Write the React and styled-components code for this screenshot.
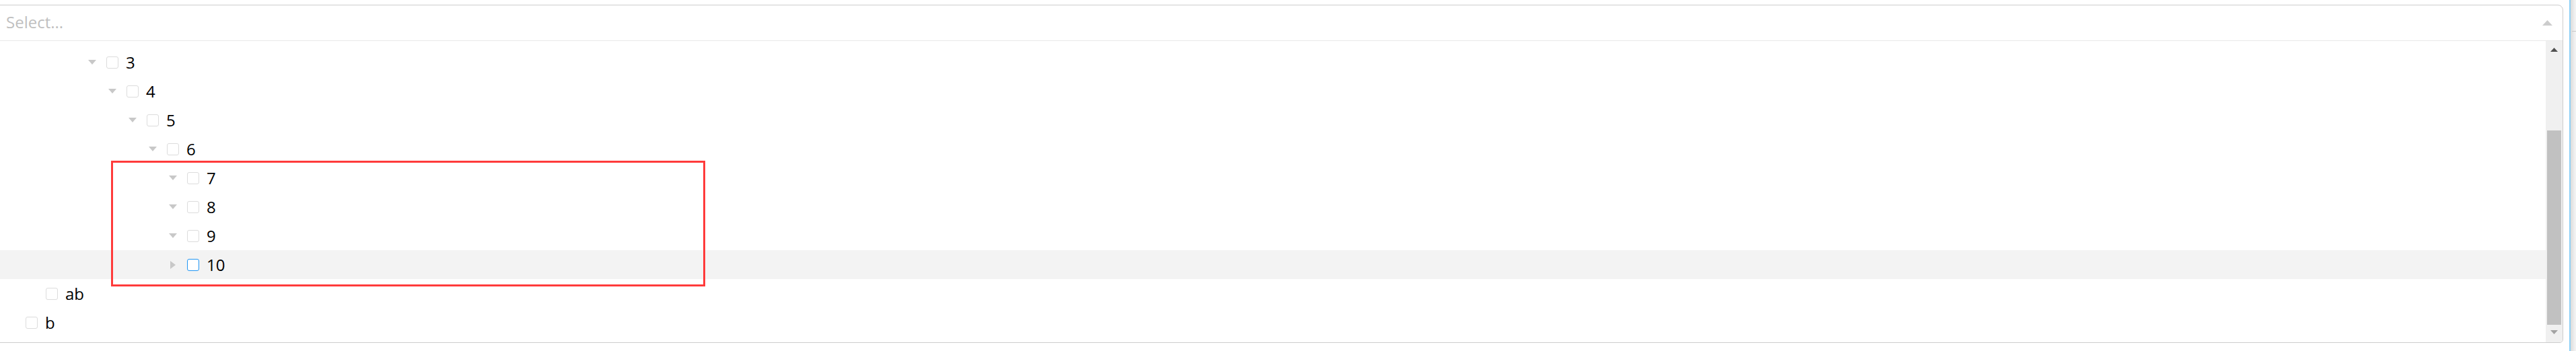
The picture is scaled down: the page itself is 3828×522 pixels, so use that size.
import React from 'react'
import styled, { createGlobalStyle } from 'styled-components'

const GlobalStyle = createGlobalStyle`
    html, body {
        margin: 0;
        padding: 0;
        background: #fff;
    }
    body {
        font-family: 'Open Sans', 'Noto Sans', 'Liberation Sans', sans-serif;
    }
`

const Page = styled.div`
    position: relative;
    display: flex;
    width: 3828px;
    height: 522px;
    overflow: hidden;
    background: #fff;
`

const SelectBox = styled.div`
    display: flex;
    flex-direction: column;
    flex-shrink: 0;
    width: 3817px;
    height: 503px;
    margin: 7px 0 0 -8px;
    box-sizing: border-box;
    border: 1px solid #cccccc;
    border-radius: 8px 8px 5px 5px;
    background: #fff;
    overflow: hidden;
`

const Control = styled.div`
    display: flex;
    align-items: center;
    justify-content: space-between;
    height: 53px;
    flex-shrink: 0;
    box-sizing: border-box;
    padding: 0 15px 0 16px;
    border-bottom: 1px solid #e8e8e8;
`

const Placeholder = styled.span`
    font-size: 24px;
    color: #bfbfbf;
    line-height: 1;
    margin-top: -2px;
`

const Menu = styled.div`
    display: flex;
    flex: 1;
    min-height: 0;
`

// list is scrolled to its end: only the last rows show
const List = styled.div`
    display: flex;
    flex-direction: column;
    flex: 1;
    overflow: hidden;
    padding: 10px 0 8px;
`

const Row = styled.div`
    display: flex;
    align-items: center;
    flex-shrink: 0;
    height: 43px;
    padding-left: ${p => 18 + p.$level * 30}px;
    background: ${p => (p.$active ? '#f3f3f3' : 'transparent')};
`

const CaretSlot = styled.div`
    display: flex;
    align-items: center;
    justify-content: center;
    width: 12px;
    margin-right: 15px;
    visibility: ${p => (p.$hidden ? 'hidden' : 'visible')};
`

const Check = styled.span`
    width: 18px;
    height: 18px;
    box-sizing: border-box;
    border: 1px solid ${p => (p.$focus ? '#2196f3' : '#dcdcdc')};
    border-radius: 3px;
    background: #fff;
    flex-shrink: 0;
`

const Label = styled.span`
    margin-left: 11px;
    font-size: 24px;
    line-height: 1;
    color: #000;
`

const Scrollbar = styled.div`
    display: flex;
    flex-direction: column;
    width: 25px;
    flex-shrink: 0;
    background: #f0f0f0;
    padding-bottom: 4px;
`

const ScrollButton = styled.div`
    display: flex;
    align-items: center;
    justify-content: center;
    height: ${p => p.$h}px;
    flex-shrink: 0;
`

const Track = styled.div`
    display: flex;
    flex-direction: column;
    justify-content: flex-end;
    flex: 1;
    padding: 0 2px;
`

const Thumb = styled.div`
    height: 289px;
    background: #c1c1c1;
`

const Gutter = styled.div`
    position: relative;
    flex: 1;
    margin-left: 9px;
    border-left: 2px solid #8fd0f5;
    background: linear-gradient(to right, #dcdcdc, #ececec 60%, #f4f4f4);
    &::after {
        content: '';
        position: absolute;
        left: 2px;
        right: 0;
        top: 46px;
        height: 1px;
        background: #c8c8c8;
    }
`

const Highlight = styled.div`
    position: absolute;
    left: 165px;
    top: 239px;
    width: 883px;
    height: 187px;
    box-sizing: border-box;
    border: 3px solid #ff3b3b;
    pointer-events: none;
`

const Triangle = ({ dir = 'down', color = '#c8c8c8', w = 12, h = 7 }) => {
    if (dir === 'right') {
        return (
            <svg width="8" height="12" viewBox="0 0 8 12">
                <path d="M 0 0 L 8 6 L 0 12 Z" fill={color}/>
            </svg>
        )
    }
    if (dir === 'up') {
        return (
            <svg width={w} height={h} viewBox={`0 0 ${w} ${h}`}>
                <path d={`M 0 ${h} L ${w / 2} 0 L ${w} ${h} Z`} fill={color}/>
            </svg>
        )
    }
    return (
        <svg width={w} height={h} viewBox={`0 0 ${w} ${h}`}>
            <path d={`M 0 0 L ${w} 0 L ${w / 2} ${h} Z`} fill={color}/>
        </svg>
    )
}

const nodes = [
    { label: '3', level: 4, caret: 'down' },
    { label: '4', level: 5, caret: 'down' },
    { label: '5', level: 6, caret: 'down' },
    { label: '6', level: 7, caret: 'down' },
    { label: '7', level: 8, caret: 'down' },
    { label: '8', level: 8, caret: 'down' },
    { label: '9', level: 8, caret: 'down' },
    { label: '10', level: 8, caret: 'right', active: true },
    { label: 'ab', level: 1 },
    { label: 'b', level: 0 },
]

const App = () => {
    return (
        <Page>
            <GlobalStyle/>
            <SelectBox>
                <Control>
                    <Placeholder>Select...</Placeholder>
                    <Triangle dir="up" color="#cccccc" w={15} h={8}/>
                </Control>
                <Menu>
                    <List>
                        {nodes.map(node => (
                            <Row key={node.label} $level={node.level} $active={node.active}>
                                <CaretSlot $hidden={!node.caret}>
                                    <Triangle dir={node.caret || 'down'}/>
                                </CaretSlot>
                                <Check $focus={node.active}/>
                                <Label>{node.label}</Label>
                            </Row>
                        ))}
                    </List>
                    <Scrollbar>
                        <ScrollButton $h={25}>
                            <Triangle dir="up" color="#505050" w={11} h={6}/>
                        </ScrollButton>
                        <Track>
                            <Thumb/>
                        </Track>
                        <ScrollButton $h={22}>
                            <Triangle dir="down" color="#a3a3a3" w={11} h={6}/>
                        </ScrollButton>
                    </Scrollbar>
                </Menu>
            </SelectBox>
            <Gutter/>
            <Highlight/>
        </Page>
    )
}

export default App
